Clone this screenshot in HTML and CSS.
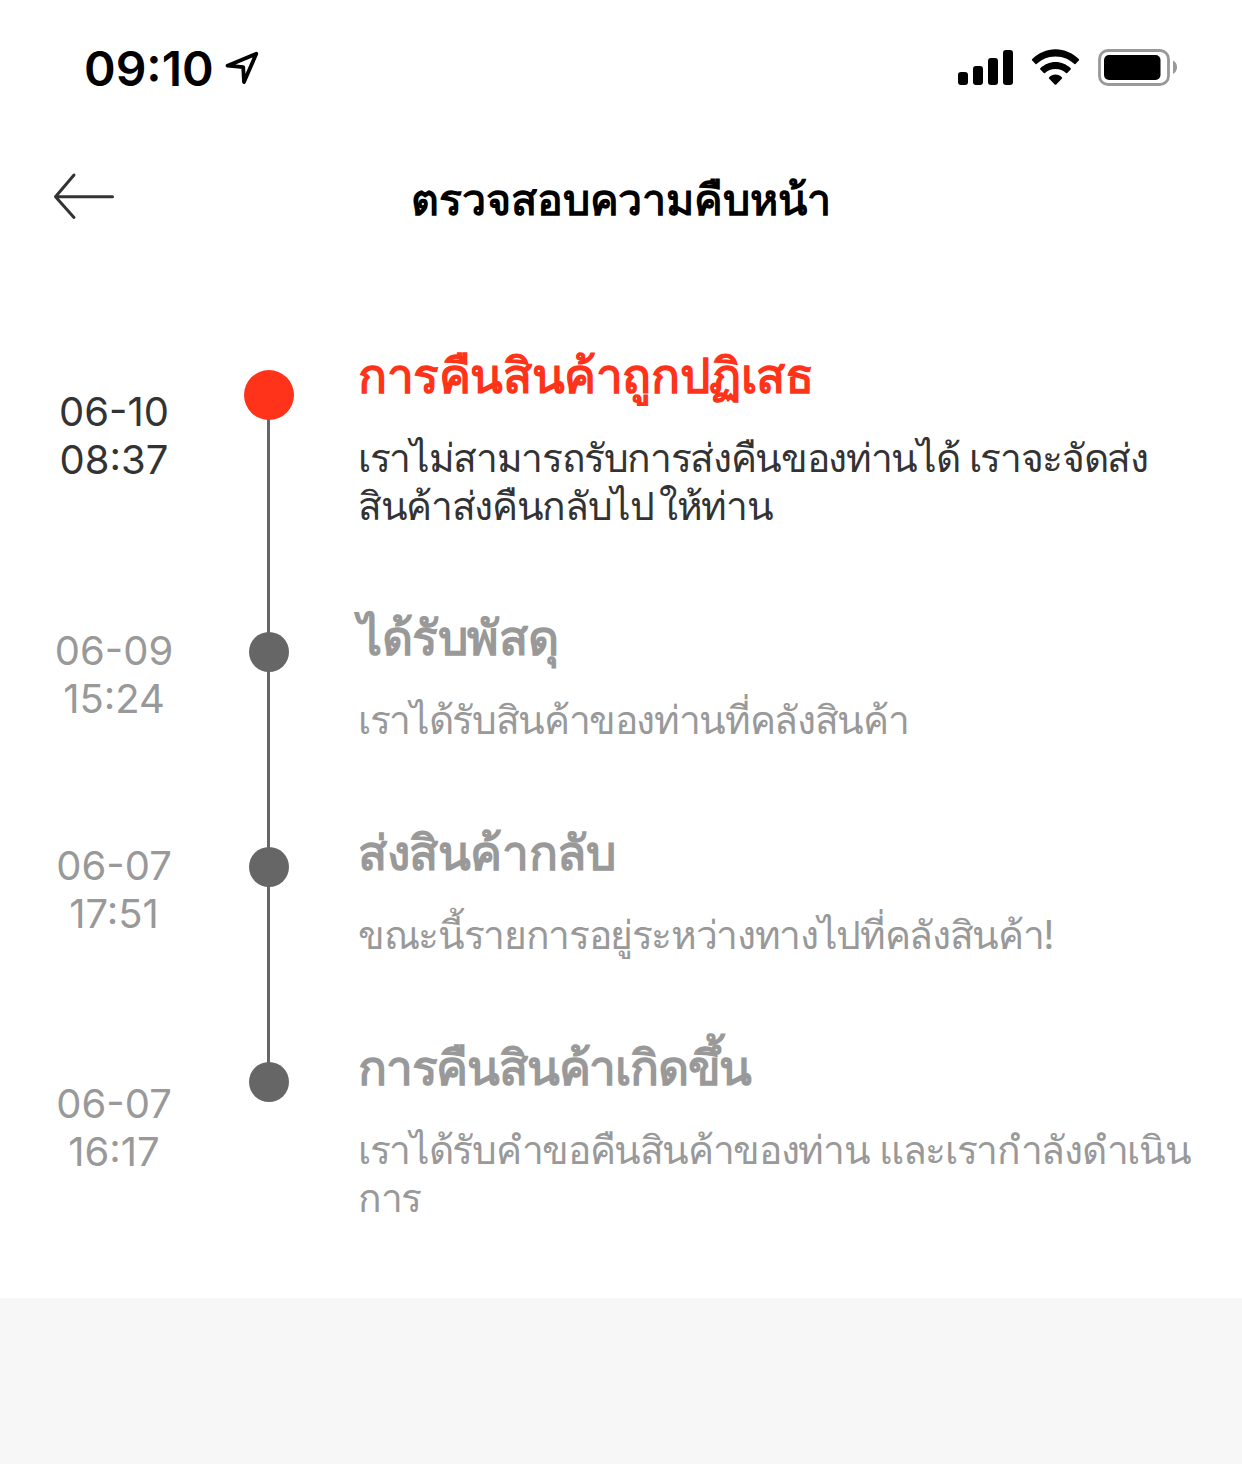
FILE: index.html
```html
<!DOCTYPE html>
<html lang="th">
<head>
<meta charset="UTF-8">
<meta name="viewport" content="width=device-width, initial-scale=1.0">
<title>ตรวจสอบความคืบหน้า</title>
<link rel="stylesheet" href="styles.css">
</head>
<body>
<div class="status-bar">
    <div class="status-left">
        <span class="clock">09:10</span>
        <svg class="location" width="34" height="34" viewBox="0 0 34 34">
            <path d="M2.500 14.700L31.300 2.700L19 31L18.200 16.200Z" fill="none" stroke="#000" stroke-width="3.800" stroke-linejoin="round"/>
        </svg>
    </div>
    <div class="status-right">
        <svg width="56" height="36" viewBox="0 0 56 36">
            <rect x="0" y="22" width="10" height="13" rx="3"/>
            <rect x="15" y="16" width="10" height="19" rx="3"/>
            <rect x="30" y="8" width="10" height="27" rx="3"/>
            <rect x="45" y="0" width="10" height="35" rx="3"/>
        </svg>
        <svg class="wifi" width="48" height="36" viewBox="0 0 48 36">
            <path d="M23.500 7.500C31.500 7.500 37.500 10.500 42.500 15Q43 15.500 43.500 15L47 11.200Q47.400 10.700 47 10.200C40.500 4 32.500 0.300 23.500 0.300S6.500 4 0 10.200Q-0.400 10.700 0 11.200L3.500 15Q4 15.500 4.500 15C9.500 10.500 15.500 7.500 23.500 7.500Z"/>
            <path d="M23.500 20C28 20 31 21.500 34 24Q34.600 24.500 35.200 24L38.700 20.400Q39.200 19.800 38.700 19.200C34.500 15.500 29.500 13 23.500 13S12.500 15.500 8.300 19.200Q7.800 19.800 8.300 20.400L11.800 24Q12.400 24.500 13 24C16 21.500 19 20 23.500 20Z"/>
            <path d="M24 35.700L30 29.500Q30.500 28.800 29.800 28.200C28 26.500 26 25.500 23.500 25.500S19 26.500 17.200 28.200Q16.500 28.800 17 29.500L23 35.700Q23.500 36 24 35.700Z"/>
        </svg>
        <svg class="battery" width="80" height="38" viewBox="0 0 80 38">
            <rect x="1.500" y="2.500" width="69" height="34" rx="8.500" fill="none" stroke="#999" stroke-width="2.800"/>
            <rect x="6" y="7" width="56.500" height="25" rx="5"/>
            <path d="M75 12.500Q79 14.500 79 19.200T75 26Z" fill="#999"/>
        </svg>
    </div>
</div>

<div class="nav-bar">
    <svg class="back" width="62" height="46" viewBox="0 0 62 46">
        <path d="M20 2L1.500 23.700L20 44.500M1.500 23.700H58.500" fill="none" stroke="#333" stroke-width="3" stroke-linecap="round" stroke-linejoin="round"/>
    </svg>
    <h1>ตรวจสอบความคืบหน้า</h1>
</div>

<div class="timeline">
    <div class="step current">
        <div class="date">06-10<br>08:37</div>
        <div class="track"><span class="dot"></span></div>
        <div class="content">
            <h2>การคืนสินค้าถูกปฏิเสธ</h2>
            <p>เราไม่สามารถรับการส่งคืนของท่านได้ เราจะจัดส่ง<br>สินค้าส่งคืนกลับไป&thinsp;ให้ท่าน</p>
        </div>
    </div>
    <div class="step">
        <div class="date">06-09<br>15:24</div>
        <div class="track"><span class="dot"></span></div>
        <div class="content">
            <h2>ได้รับพัสดุ</h2>
            <p>เราได้รับสินค้าของท่านที่คลังสินค้า</p>
        </div>
    </div>
    <div class="step">
        <div class="date">06-07<br>17:51</div>
        <div class="track"><span class="dot"></span></div>
        <div class="content">
            <h2>ส่งสินค้ากลับ</h2>
            <p>ขณะนี้รายการอยู่ระหว่างทางไปที่คลังสินค้า!</p>
        </div>
    </div>
    <div class="step last">
        <div class="date">06-07<br>16:17</div>
        <div class="track"><span class="dot"></span></div>
        <div class="content">
            <h2>การคืนสินค้าเกิดขึ้น</h2>
            <p>เราได้รับคำขอคืนสินค้าของท่าน และเรากำลังดำเนิน<br>การ</p>
        </div>
    </div>
</div>
</body>
</html>
```
FILE: styles.css
```css
* {
    box-sizing: border-box;
}
body {
    margin: 0;
    min-height: 1464px;
    background-color: #f7f7f7;
    font-family: Inter, "Noto Sans", sans-serif;
}
h1, h2, p {
    margin: 0;
    white-space: nowrap;
}
svg {
    display: block;
}
.status-bar {
    height: 132px;
    padding: 0 64px 0 84px;
    background-color: #fff;
    display: flex;
    justify-content: space-between;
}
.status-left {
    display: flex;
    padding-top: 38px;
}
.clock {
    font-size: 48px;
    line-height: 61px;
    font-weight: 600;
}
.location {
    margin: 13px 0 0 11px;
}
.status-right {
    display: flex;
    padding-top: 50px;
}
.wifi {
    margin: -1px 0 0 18px;
    overflow: visible;
}
.battery {
    margin: -2px 0 0 18px;
}
.nav-bar {
    height: 132px;
    padding: 0 54px 4px;
    background-color: #fff;
    display: grid;
    grid-template-columns: 62px 1fr 62px;
    align-items: center;
}
.back {
    overflow: visible;
}
h1 {
    padding-top: 6px;
    font-size: 43px;
    line-height: 60px;
    letter-spacing: -0.1px;
    text-align: center;
}
.timeline {
    height: 1034px;
    padding-top: 82px;
    background-color: #fff;
}
.step {
    height: 215px;
    display: grid;
    grid-template-columns: 228px 82px 1fr;
    color: #999;
}
.current {
    height: 262px;
    color: #333;
}
.date {
    padding-top: 19px;
    font-size: 40px;
    line-height: 48px;
    text-align: center;
}
.current .date,
.last .date {
    padding-top: 42px;
}
.track {
    position: relative;
    display: flex;
    justify-content: center;
    padding-top: 24px;
}
/* line down to the next dot */
.track::before {
    content: "";
    position: absolute;
    left: 39px;
    top: 44px;
    width: 3px;
    height: 100%;
    background-color: #666;
}
.last .track::before {
    display: none;
}
.dot {
    position: relative;
    width: 40px;
    height: 40px;
    border-radius: 50%;
    background-color: #666;
}
.current .dot {
    width: 50px;
    height: 50px;
    background-color: #ff331a;
}
.content {
    padding-left: 48px;
}
h2 {
    font-size: 48px;
    line-height: 60px;
    letter-spacing: -0.4px;
}
.current h2 {
    color: #ff331a;
}
.last h2 {
    letter-spacing: -1.2px;
}
p {
    padding-top: 28px;
    font-size: 39px;
    line-height: 48px;
    letter-spacing: -1.35px;
}
```
